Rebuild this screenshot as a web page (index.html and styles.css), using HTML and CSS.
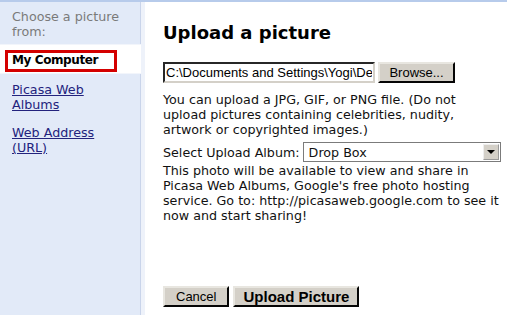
FILE: index.html
```html
<!DOCTYPE html>
<html lang="en">
<head>
    <meta charset="UTF-8">
    <title>Upload a picture</title>
    <link rel="stylesheet" href="styles.css">
</head>
<body>
    <div class="page">
        <div class="sidebar">
            <div class="choose">Choose a picture from:</div>
            <div class="current"><span class="current-box">My Computer</span></div>
            <div class="sources">
                <a href="#" class="source">Picasa Web Albums</a>
                <a href="#" class="source">Web Address (URL)</a>
            </div>
        </div>

        <div class="main">
            <h1 class="title">Upload a picture</h1>

            <div class="file-row">
                <input type="text" class="file-path" value="C:\Documents and Settings\Yogi\Desktop\photo.jpg">
                <button class="win-button browse">Browse...</button>
            </div>

            <p class="note">You can upload a JPG, GIF, or PNG file. (Do not upload pictures containing celebrities, nudity, artwork or copyrighted images.)</p>

            <div class="album-row">
                <span class="album-label">Select Upload Album:</span>
                <div class="album-select">
                    <span class="album-value">Drop Box</span>
                    <span class="album-arrow"></span>
                </div>
            </div>
            <p class="info">This photo will be available to view and share in Picasa Web Albums, Google's free photo hosting service. Go to: http://picasaweb.google.com to see it now and start sharing!</p>

            <div class="actions">
                <button class="win-button">Cancel</button>
                <button class="win-button upload">Upload Picture</button>
            </div>
        </div>
    </div>
</body>
</html>
```

FILE: styles.css
```css
body {
    margin: 0;
    font-family: Verdana, "DejaVu Sans", sans-serif;
    font-size: 12.7px;
    line-height: 15px;
    color: #111;
    background-color: #fff;
}

.page {
    display: flex;
    height: 315px;
    border-top: 2px solid #b7cbeb;
    box-sizing: border-box;
}

.sidebar {
    width: 145px;
    flex-shrink: 0;
    background-color: #e2eaf8;
    border-right: 4px solid #eef2fa;
    box-shadow: inset -1px 0 0 #c9d4ea;
    box-sizing: border-box;
}

.choose {
    padding: 7px 12px 5px;
    color: #7a7a7a;
    border-bottom: 1px solid #f2f5fb;
}

.current {
    background-color: #fff;
    padding: 5px 5px 0;
    height: 23px;
    border-bottom: 1px solid #f2f5fb;
}

.current-box {
    display: block;
    width: 98px;
    border: 3px solid #d40000;
    padding: 0 4px 1px;
    font-size: 12px;
    letter-spacing: -0.4px;
    font-weight: bold;
    color: #000;
}

.sources {
    padding: 8px 12px;
}

.source {
    display: block;
    color: #23237d;
    margin-bottom: 13px;
}

.main {
    padding-left: 18px;
}

.title {
    margin: 19px 0 0;
    font-size: 18px;
    line-height: 24px;
    font-weight: bold;
    color: #000;
}

.file-row {
    display: flex;
    margin-top: 17px;
    gap: 3px;
}

.file-path {
    width: 212px;
    height: 21px;
    box-sizing: border-box;
    margin: 0;
    padding: 1px 1px;
    font-family: "Liberation Sans", Arial, sans-serif;
    font-size: 13px;
    color: #000;
    border: 2px inset #d4d0c8;
    border-top-color: #7b7b7b;
    border-left-color: #7b7b7b;
}

.win-button {
    height: 21px;
    margin: 0;
    padding: 0 8px;
    font-family: "Liberation Sans", Arial, sans-serif;
    font-size: 13px;
    color: #000;
    background-color: #d4d0c8;
    border: 2px outset #e8e6e0;
    border-right-color: #5a5a5a;
    border-bottom-color: #5a5a5a;
}

.browse {
    width: 77px;
}

.note {
    margin: 9px 0 0;
    width: 310px;
}

.album-row {
    display: flex;
    align-items: center;
    margin-top: 5px;
    gap: 3px;
}

.album-select {
    display: flex;
    align-items: center;
    justify-content: space-between;
    width: 198px;
    height: 20px;
    box-sizing: border-box;
    border: 1px solid #7b7b7b;
    background-color: #fff;
    padding-left: 5px;
}

.album-arrow {
    width: 16px;
    height: 16px;
    margin-right: 1px;
    background-color: #d4d0c8;
    border: 1px outset #eee;
    box-sizing: border-box;
    position: relative;
}

.album-arrow::after {
    content: "";
    position: absolute;
    left: 3px;
    top: 5px;
    border-left: 4px solid transparent;
    border-right: 4px solid transparent;
    border-top: 4px solid #000;
}

.info {
    margin: 1px 0 0;
    width: 340px;
}

.actions {
    display: flex;
    gap: 4px;
    margin-top: 63px;
}

.actions .win-button {
    height: 21px;
    padding: 0 11px;
}

.actions .upload {
    font-weight: bold;
    font-size: 15px;
    padding: 0 8px;
}
```
